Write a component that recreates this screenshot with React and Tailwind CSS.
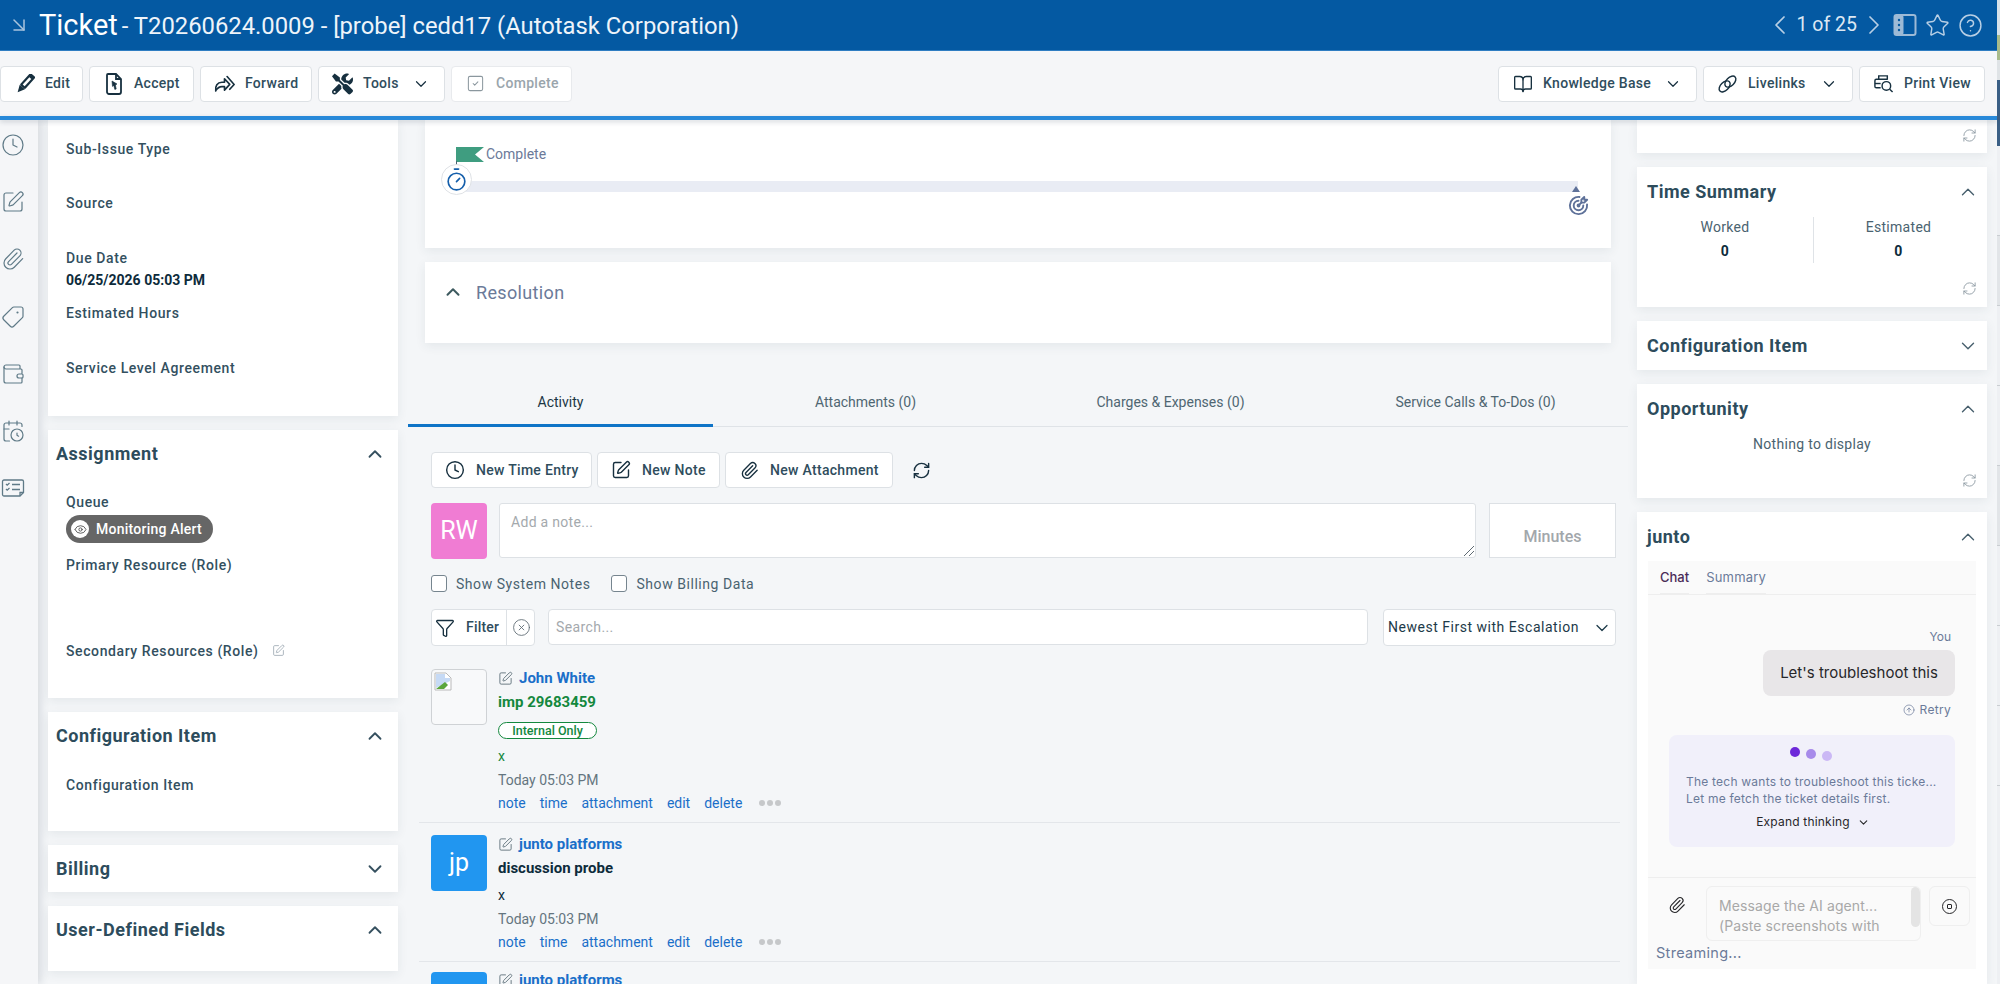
import React from "react";
import {
  ArrowDownRight, ChevronLeft, ChevronRight, ChevronUp, ChevronDown, Star, CircleHelp, Clock, SquarePen,
  Paperclip, Tag, Wallet, CalendarClock, RefreshCw, Timer, BookOpen, SquareCheck, Filter,
  CircleX, CircleArrowUp, Eye,
} from "lucide-react";
import { FaTools } from "react-icons/fa";
import { TbTargetArrow } from "react-icons/tb";

function PencilIcon() {
  return (
    <svg width="20" height="20" viewBox="0 0 20 20">
      <g transform="rotate(42 10 10)">
        <rect x="6.500" y="-2" width="7" height="16" rx="1.200" fill="#17303f" />
        <path d="M6.500 14L10 21l3.500-7z" fill="#17303f" />
        <rect x="8.700" y="2" width="2.600" height="10" fill="#fff" />
      </g>
    </svg>
  );
}

function AcceptIcon() {
  return (
    <svg width="20" height="24" viewBox="0 0 20 24" fill="none" stroke="#17303f" strokeWidth="1.800">
      <path d="M4 2h8l5 5v13a2 2 0 0 1-2 2H5a2 2 0 0 1-2-2V3a1 1 0 0 1 1-1z" />
      <path d="M12 2v5h5" />
      <path d="M8 9l5 3-1.600 1 .8 4-1.400.4-1-4-1.300 1z" fill="#17303f" strokeWidth="0.600" />
    </svg>
  );
}

function ForwardIcon() {
  return (
    <svg width="22" height="22" viewBox="0 0 24 24" fill="none" stroke="#17303f" strokeWidth="1.900" strokeLinejoin="round" strokeLinecap="round">
      <path d="M2 20c-1-6 2-10 7-10h3V6l6 6.500-6 6.500v-4H9c-3 0-5 1.500-7 4.500z" />
      <path d="M15 3.500l8 9-5 5.500" />
    </svg>
  );
}

function LinkIcon() {
  return (
    <svg width="22" height="22" viewBox="0 0 22 22" fill="none" stroke="#17303f" strokeWidth="1.500">
      <ellipse cx="8" cy="13.500" rx="7" ry="4.200" transform="rotate(-45 8 13.500)" />
      <ellipse cx="14" cy="8.500" rx="7" ry="4.200" transform="rotate(-45 14 8.500)" />
    </svg>
  );
}

function PrintIcon() {
  return (
    <svg width="22" height="22" viewBox="0 0 22 22" fill="none" stroke="#17303f" strokeWidth="1.500">
      <path d="M6 6V2.500h9V6" />
      <path d="M8 15H3.500a1.500 1.500 0 0 1-1.500-1.500v-6A1.500 1.500 0 0 1 3.500 6h12" />
      <path d="M2 10.500h6" />
      <circle cx="14" cy="13" r="4.500" />
      <path d="M17.500 16.500l3 3" />
    </svg>
  );
}

function PanelIcon() {
  return (
    <svg width="24" height="24" viewBox="0 0 24 24">
      <rect x="1.500" y="2" width="21" height="20" rx="2" fill="none" stroke="#9dbad6" strokeWidth="2" />
      <rect x="1.500" y="2" width="9" height="20" rx="2" fill="#9dbad6" />
      <circle cx="6" cy="7" r="1.200" fill="#0459a2" />
      <circle cx="6" cy="12" r="1.200" fill="#0459a2" />
      <circle cx="6" cy="17" r="1.200" fill="#0459a2" />
    </svg>
  );
}

function ChecklistIcon() {
  return (
    <svg width="24" height="24" viewBox="0 0 24 24" fill="none" stroke="#5f7a87" strokeWidth="1.300">
      <path d="M19 20H3a1.500 1.500 0 0 1-1.500-1.500v-13A1.500 1.500 0 0 1 3 4h18a1.500 1.500 0 0 1 1.500 1.500V16.500L19 20z" />
      <path d="M19 20v-3.500h3.500" />
      <path d="M5 8l1.200 1.200L8.500 7M5 13l1.200 1.200L8.500 12M11 8.500h8M11 13.500h8" />
    </svg>
  );
}

function BrokenImage() {
  return (
    <svg width="19" height="19" viewBox="0 0 19 19">
      <path d="M1 1h11l5 5v12H1z" fill="#fff" stroke="#b9b9b9" />
      <path d="M2 2h9v4h5v3L8 13l-6 3z" fill="#c6daf5" />
      <path d="M2 17l9-7 3 3-4 4z" fill="#5aa63c" />
    </svg>
  );
}

function Flag() {
  return (
    <svg width="28" height="15" viewBox="0 0 28 15">
      <path d="M0 0h28l-9 7.500 9 7.500H0z" fill="#3f9d80" />
    </svg>
  );
}

function ToolBtn({ w, icon, label, caret, disabled }) {
  return (
    <div
      style={{ width: w }}
      className={`h-[36px] shrink-0 flex items-center pl-[13px] bg-white border rounded-[4px] text-[14px] font-medium tracking-[0.3px] ${
        disabled ? "border-[#e8eaed] bg-[#f7f8f9] text-[#9aa5ac]" : "border-[#dde1e5] text-[#2f4d5d]"
      }`}
    >
      <span className="w-[21px] h-[24px] flex items-center justify-center shrink-0">{icon}</span>
      <span className="ml-[10px] whitespace-nowrap">{label}</span>
      {caret && <ChevronDown size={18} strokeWidth={1.600} className="ml-auto mr-[14px] text-[#17303f]" />}
    </div>
  );
}

function Card({ h, children, className = "" }) {
  return (
    <div
      style={{ height: h }}
      className={`shrink-0 bg-white shadow-[0_3px_10px_rgba(40,60,80,0.08)] ${className}`}
    >
      {children}
    </div>
  );
}

function Section({ title, h, open = true, children }) {
  return (
    <Card h={h} className="px-[8px] relative">
      <div className="flex items-center justify-between h-[47px]">
        <span className="text-[18px] font-bold tracking-[0.5px] text-[#2d4c5c]">{title}</span>
        {open ? (
          <ChevronUp size={22} strokeWidth={2} className="mr-[4px] text-[#35505f]" />
        ) : (
          <ChevronDown size={22} strokeWidth={2} className="mr-[4px] text-[#35505f]" />
        )}
      </div>
      {children}
    </Card>
  );
}

function Label({ children, mt }) {
  return (
    <div style={{ marginTop: mt }} className="h-[20px] leading-[20px] text-[14px] font-medium tracking-[0.6px] text-[#33505f] whitespace-nowrap">
      {children}
    </div>
  );
}

function RightSection({ title, h, open = true, children }) {
  return (
    <Card h={h} className="relative">
      <div className="flex items-center justify-between h-[49px] pl-[10px] pr-[8px]">
        <span className="text-[18px] font-bold tracking-[0.5px] text-[#2d4c5c]">{title}</span>
        {open ? (
          <ChevronUp size={22} strokeWidth={1.500} className="text-[#475f6d]" />
        ) : (
          <ChevronDown size={22} strokeWidth={1.500} className="text-[#475f6d]" />
        )}
      </div>
      {children}
    </Card>
  );
}

function Refresh({ className }) {
  return <RefreshCw size={15} strokeWidth={1.400} className={`text-[#8a97a0] ${className}`} />;
}

function ActionBtn({ w, icon, label }) {
  return (
    <div
      style={{ width: w }}
      className="h-[36px] flex items-center pl-[12px] bg-white border border-[#dde1e5] rounded-[4px] text-[14px] font-medium tracking-[0.3px] text-[#2f4d5d] shrink-0"
    >
      <span className="w-[22px] flex justify-center shrink-0 text-[#17303f]">{icon}</span>
      <span className="ml-[10px] whitespace-nowrap">{label}</span>
    </div>
  );
}

function Links() {
  return (
    <div className="mt-[3px] h-[20px] flex items-center gap-[14px] text-[14px] text-[#1a6fc9]">
      <span>note</span>
      <span>time</span>
      <span>attachment</span>
      <span>edit</span>
      <span>delete</span>
      <span className="ml-[3px] flex gap-[2px]">
        <i className="block w-[6px] h-[6px] rounded-full bg-[#c6c8ca]" />
        <i className="block w-[6px] h-[6px] rounded-full bg-[#c6c8ca]" />
        <i className="block w-[6px] h-[6px] rounded-full bg-[#c6c8ca]" />
      </span>
    </div>
  );
}

function NameLine({ name }) {
  return (
    <div className="h-[20px] flex items-center gap-[6px] text-[15px] font-bold text-[#1a6fc9] whitespace-nowrap">
      <SquarePen size={15} strokeWidth={1.500} className="text-[#64757f]" />
      <span>{name}</span>
    </div>
  );
}

function Tab({ label, active }) {
  return (
    <div
      className={`flex-1 h-[48px] pt-[2px] flex items-center justify-center text-[14px] ${
        active ? "border-b-[3px] border-[#0f74c7] text-[#1a3645]" : "border-b border-[#dfe3e7] pb-[2px] text-[#4f6672]"
      }`}
    >
      {label}
    </div>
  );
}

function ChatPanel() {
  return (
    <div className="mx-[11px] h-[408px] bg-[#fafafa] flex flex-col font-[Inter,sans-serif]">
      <div className="h-[34px] shrink-0 border-b border-[#eeeeee] flex px-[12px] gap-[17px] text-[13px]">
        <div className="h-[34px] pt-[7px] border-b-2 border-[#eeeeee] font-medium text-[#4b2c58]">Chat</div>
        <div className="h-[34px] pt-[7px] border-b-2 border-[#eeeeee] tracking-[0.2px] text-[#6b7a99]">Summary</div>
      </div>
      <div className="h-[282px] shrink-0 pt-[33px] pr-[21px] flex flex-col items-end">
        <div className="h-[18px] leading-[18px] pr-[4px] text-[12px] text-[#6b7a99]">You</div>
        <div className="mt-[4px] w-[192px] h-[46px] rounded-[8px] bg-[#e8e6e8] flex items-center justify-center text-[15px] text-[#27272a] whitespace-nowrap">
          Let's troubleshoot this
        </div>
        <div className="mt-[6px] h-[16px] pr-[4px] flex items-center gap-[5px] text-[12px] tracking-[0.3px] text-[#6b7a99]">
          <CircleArrowUp size={12} strokeWidth={1.400} />
          Retry
        </div>
        <div className="mt-[17px] w-[286px] h-[112px] rounded-[8px] bg-[#f1f0fa] flex flex-col px-[17px] pt-[12px]">
          <div className="flex justify-center gap-[6px] h-[14px] pr-[2px]">
            <i className="block w-[10px] h-[10px] rounded-full bg-[#6d28d9]" />
            <i className="block w-[10px] h-[10px] rounded-full bg-[#a78bea] mt-[2px]" />
            <i className="block w-[10px] h-[10px] rounded-full bg-[#cbb8f5] mt-[4px]" />
          </div>
          <div className="mt-[12px] text-[12px] leading-[17px] tracking-[0.22px] text-[#6b7a99] whitespace-nowrap">
            The tech wants to troubleshoot this ticke...
            <br />
            Let me fetch the ticket details first.
          </div>
          <div className="mt-[6px] h-[18px] flex items-center justify-center gap-[7px] pl-[2px] text-[12px] tracking-[0.2px] text-[#27272a]">
            Expand thinking
            <ChevronDown size={13} strokeWidth={2} />
          </div>
        </div>
      </div>
      <div className="border-t border-[#eeeeee] flex-1 relative">
        <div className="flex items-start pt-[8px]">
          <span className="w-[58px] flex justify-center pt-[10px] text-[#27272a]">
            <Paperclip size={18} strokeWidth={1.500} />
          </span>
          <div className="w-[215px] h-[55px] overflow-hidden bg-[#fafafa] border border-[#efefef] rounded-[6px] pl-[12px] pt-[9px] relative text-[14px] leading-[20px] tracking-[0.1px] text-[#a8a8a8] whitespace-nowrap">
            Message the AI agent...
            <br />
            (Paste screenshots with
            <br />
            Ctrl+V or upload)
            <i className="absolute right-[0px] top-[0px] block w-[9px] h-[40px] rounded-[5px] bg-[#e4e4e4]" />
          </div>
          <div className="ml-[8px] w-[41px] h-[40px] rounded-[6px] border border-[#efefef] flex items-center justify-center">
            <span className="w-[15px] h-[15px] rounded-full border-[1.500px] border-[#27272a] flex items-center justify-center">
              <i className="block w-[5px] h-[5px] rounded-[1px] border border-[#27272a]" />
            </span>
          </div>
        </div>
        <div className="absolute left-[8px] top-[65px] h-[20px] leading-[20px] text-[14.500px] tracking-[0.3px] text-[#6b7a99]">Streaming...</div>
      </div>
    </div>
  );
}

export default function App() {
  return (
    <div className="w-[2000px] h-[984px] flex overflow-hidden bg-[#f4f6f8] font-[Roboto,sans-serif]">
      <div className="w-[1997px] h-[984px] flex flex-col shrink-0">
        {/* title bar */}
        <div className="h-[51px] shrink-0 bg-[#0459a2] border-b border-[#2f7dc2] flex items-center text-white pl-[7px] pr-[14px]">
          <ArrowDownRight size={24} strokeWidth={1.500} className="text-[#a9c4de]" />
          <span className="ml-[8px] text-[29px] leading-[32px]">Ticket</span>
          <span className="ml-[4px] mt-[1px] text-[23.800px] leading-[32px] whitespace-nowrap text-[#eef4fa]">- T20260624.0009 - [probe] cedd17 (Autotask Corporation)</span>
          <div className="ml-auto flex items-center text-[#b8cfe5]">
            <ChevronLeft size={32} strokeWidth={1.300} />
            <span className="ml-[1px] text-[19.500px] text-[#dce8f3] whitespace-nowrap">1 of 25</span>
            <ChevronRight size={32} strokeWidth={1.300} className="ml-[1px]" />
            <span className="ml-[3px]"><PanelIcon /></span>
            <Star size={25} strokeWidth={1.400} className="ml-[8px]" />
            <CircleHelp size={25} strokeWidth={1.400} className="ml-[8px]" />
          </div>
        </div>

        {/* toolbar */}
        <div className="h-[65px] shrink-0 bg-[#f5f6f8] flex items-center gap-[6px] pr-[12px]">
          <ToolBtn w={83} label="Edit" icon={<PencilIcon />} />
          <ToolBtn w={105} label="Accept" icon={<AcceptIcon />} />
          <ToolBtn w={112} label="Forward" icon={<ForwardIcon />} />
          <ToolBtn w={127} label="Tools" caret icon={<FaTools size={22} className="text-[#17303f]" />} />
          <ToolBtn w={121} label="Complete" disabled icon={<SquareCheck size={19} strokeWidth={1.300} className="text-[#8b979e]" />} />
          <div className="ml-auto flex gap-[6px]">
            <ToolBtn w={199} label="Knowledge Base" caret icon={<BookOpen size={20} strokeWidth={1.600} className="text-[#17303f]" />} />
            <ToolBtn w={150} label="Livelinks" caret icon={<LinkIcon />} />
            <ToolBtn w={126} label="Print View" icon={<PrintIcon />} />
          </div>
        </div>
        <div className="h-[4px] shrink-0 bg-[#2889d9] shadow-[0_2px_5px_rgba(40,60,80,0.2)] relative z-10" />

        {/* body */}
        <div className="flex-1 flex overflow-hidden">
          <div className="w-[38px] shrink-0 bg-[#f5f6f8] shadow-[3px_0_8px_rgba(40,60,80,0.14)] flex flex-col items-start pl-[1px] pt-[13px] text-[#5f7a87] gap-[33.200px]">
            <Clock size={24} strokeWidth={1.200} />
            <SquarePen size={24} strokeWidth={1.200} />
            <Paperclip size={24} strokeWidth={1.200} />
            <Tag size={24} strokeWidth={1.200} className="rotate-[90deg]" />
            <Wallet size={24} strokeWidth={1.200} />
            <CalendarClock size={24} strokeWidth={1.200} />
            <ChecklistIcon />
          </div>

          {/* left column */}
          <div className="w-[350px] ml-[10px] shrink-0 flex flex-col gap-[14px]">
            <Card h={296} className="pl-[18px] pt-[19px]">
              <Label>Sub-Issue Type</Label>
              <Label mt={34}>Source</Label>
              <Label mt={35}>Due Date</Label>
              <div className="mt-[2px] h-[20px] leading-[20px] text-[14px] font-bold text-[#0d2b3b]">06/25/2026 05:03 PM</div>
              <Label mt={13}>Estimated Hours</Label>
              <Label mt={35}>Service Level Agreement</Label>
            </Card>
            <Section title="Assignment" h={268}>
              <div className="pl-[10px] pt-[15px]">
                <Label>Queue</Label>
                <div className="mt-[3px] w-[147px] h-[28px] rounded-full bg-[#666666] flex items-center pl-[5px] text-[14px] font-medium tracking-[0.25px] text-white">
                  <span className="w-[18px] h-[18px] rounded-full bg-white flex items-center justify-center">
                    <Eye size={13} strokeWidth={1.700} className="text-[#555555]" />
                  </span>
                  <span className="ml-[7px] whitespace-nowrap">Monitoring Alert</span>
                </div>
                <Label mt={12}>Primary Resource (Role)</Label>
                <div className="mt-[66px] flex items-center">
                  <Label>Secondary Resources (Role)</Label>
                  <SquarePen size={13} strokeWidth={1.300} className="ml-[13px] -mt-[2px] text-[#8b9aa5]" />
                </div>
              </div>
            </Section>
            <Section title="Configuration Item" h={119}>
              <div className="pl-[10px] pt-[16px]">
                <Label>Configuration Item</Label>
              </div>
            </Section>
            <Section title="Billing" h={47} open={false} />
            <Section title="User-Defined Fields" h={65} />
          </div>

          {/* center column */}
          <div className="w-[1220px] ml-[10px] shrink-0 flex flex-col">
            <div className="px-[17px] flex flex-col gap-[14px]">
              <Card h={128} className="relative">
                <div className="absolute left-[31px] top-[27px]"><Flag /></div>
                <div className="absolute left-[31px] top-[41px] w-px h-[4px] bg-[#4a6370]" />
                <div className="absolute left-[61px] top-[24px] text-[14px] leading-[20px] text-[#6b7a99]">Complete</div>
                <div className="absolute left-[33px] top-[61px] w-[1120px] h-[11px] bg-[#e9ecf4]" />
                <div className="absolute left-[16px] top-[44px] w-[31px] h-[31px] rounded-full bg-white border border-[#dfe2e6] flex items-center justify-center">
                  <Timer size={25} strokeWidth={1.600} className="text-[#155fab]" />
                </div>
                <div className="absolute left-[1147px] top-[66px] w-0 h-0 border-x-[4px] border-x-transparent border-b-[6px] border-b-[#5e7199]" />
                <TbTargetArrow size={23} className="absolute left-[1142px] top-[74px] text-[#5e7199]" />
              </Card>
              <Card h={81} className="flex items-start pl-[17px] pt-[19px]">
                <ChevronUp size={22} strokeWidth={2.200} className="text-[#3d5a5f]" />
                <span className="ml-[12px] text-[18px] leading-[24px] tracking-[0.35px] text-[#6b7a99]">Resolution</span>
              </Card>
            </div>

            <div className="mt-[36px] flex">
              <Tab label="Activity" active />
              <Tab label="Attachments (0)" />
              <Tab label="Charges & Expenses (0)" />
              <Tab label="Service Calls & To-Dos (0)" />
            </div>

            <div className="pl-[23px] pr-[12px]">
              <div className="mt-[25px] flex items-center gap-[5px]">
                <ActionBtn w={161} label="New Time Entry" icon={<Clock size={20} strokeWidth={1.700} />} />
                <ActionBtn w={123} label="New Note" icon={<SquarePen size={20} strokeWidth={1.700} />} />
                <ActionBtn w={168} label="New Attachment" icon={<Paperclip size={19} strokeWidth={1.700} />} />
                <RefreshCw size={19} strokeWidth={1.800} className="ml-[14px] text-[#17303f]" />
              </div>

              <div className="mt-[15px] flex">
                <div className="w-[56px] h-[56px] rounded-[4px] bg-[#f07cd3] flex items-center justify-center text-[25px] text-white">RW</div>
                <div className="ml-[12px] w-[977px] h-[55px] bg-white border border-[#dde1e5] rounded-[3px] pl-[11px] pt-[8px] text-[14px] leading-[20px] tracking-[0.3px] text-[#a4a9ad] relative">
                  Add a note...
                  <svg width="11" height="11" viewBox="0 0 11 11" className="absolute right-[1px] bottom-[1px]" stroke="#5f6b73" strokeWidth="1">
                    <path d="M1 11L11 1M6 11l5-5" />
                  </svg>
                </div>
                <div className="ml-[13px] w-[127px] h-[55px] bg-white border border-[#dde1e5] pt-[21px] text-center text-[16px] leading-[24px] font-medium text-[#a2a7ab]">Minutes</div>
              </div>

              <div className="mt-[16px] h-[17px] flex items-center text-[14px] tracking-[0.55px] text-[#4a6370]">
                <i className="block w-[16px] h-[17px] bg-white border border-[#76858f] rounded-[3px]" />
                <span className="ml-[9px] mt-[2px]">Show System Notes</span>
                <i className="ml-[21px] block w-[16px] h-[17px] bg-white border border-[#76858f] rounded-[3px]" />
                <span className="ml-[9px] mt-[2px]">Show Billing Data</span>
              </div>

              <div className="mt-[17px] flex items-start">
                <div className="w-[104px] h-[37px] bg-white border border-[#dde1e5] rounded-[4px] flex items-center text-[14px] font-medium tracking-[0.2px] text-[#2f4d5d]">
                  <Filter size={20} strokeWidth={1.600} className="ml-[3px] text-[#17303f]" />
                  <span className="ml-[11px]">Filter</span>
                  <span className="ml-[7px] h-[35px] border-l border-[#dde1e5] pl-[5px] flex items-center">
                    <CircleX size={19} strokeWidth={1.100} className="text-[#5f6b73]" />
                  </span>
                </div>
                <div className="ml-[13px] w-[820px] h-[36px] bg-white border border-[#dde1e5] rounded-[4px] pl-[7px] flex items-center text-[14px] tracking-[0.4px] text-[#a4a9ad]">Search...</div>
                <div className="ml-[15px] w-[233px] h-[37px] bg-white border border-[#dde1e5] rounded-[4px] pl-[4px] flex items-center text-[14px] tracking-[0.52px] text-[#1d3a49] whitespace-nowrap">
                  Newest First with Escalation
                  <ChevronDown size={20} strokeWidth={1.500} className="ml-auto mr-[3px]" />
                </div>
              </div>
            </div>

            {/* activity feed */}
            <div className="mt-[22px] ml-[11px] w-[1201px]">
              <div className="border-b border-[#e3e6ea] pl-[12px] h-[155px] flex">
                <div className="mt-[1px] w-[56px] h-[56px] rounded-[4px] border border-[#cfd2d5] bg-[#f8f9fa] shrink-0 pl-[2px] pt-[2px]"><BrokenImage /></div>
                <div className="ml-[11px]">
                  <NameLine name="John White" />
                  <div className="mt-[4px] h-[20px] leading-[20px] text-[15px] font-bold text-[#14883e]">imp 29683459</div>
                  <div className="mt-[10px] w-[99px] h-[17px] rounded-full border border-[#14883e] bg-white text-center text-[12.500px] font-medium leading-[15px] text-[#14883e]">Internal Only</div>
                  <div className="mt-[7px] h-[20px] leading-[20px] text-[14px] text-[#14883e]">x</div>
                  <div className="mt-[4px] h-[20px] leading-[20px] text-[14px] text-[#64757f]">Today 05:03 PM</div>
                  <Links />
                </div>
              </div>
              <div className="border-b border-[#e3e6ea] pl-[12px] pt-[12px] h-[139px] flex">
                <div className="w-[56px] h-[56px] rounded-[4px] bg-[#2196f0] shrink-0 flex items-center justify-center text-[25px] text-white">jp</div>
                <div className="ml-[11px] -mt-[1px]">
                  <NameLine name="junto platforms" />
                  <div className="mt-[4px] h-[20px] leading-[20px] text-[15px] font-bold text-[#0d2b3b]">discussion probe</div>
                  <div className="mt-[7px] h-[20px] leading-[20px] text-[14px] text-[#0d2b3b]">x</div>
                  <div className="mt-[4px] h-[20px] leading-[20px] text-[14px] text-[#64757f]">Today 05:03 PM</div>
                  <Links />
                </div>
              </div>
              <div className="pl-[12px] pt-[10px] flex">
                <div className="w-[56px] h-[56px] rounded-[4px] bg-[#2196f0] shrink-0" />
                <div className="ml-[11px] -mt-[2px]">
                  <NameLine name="junto platforms" />
                </div>
              </div>
            </div>
          </div>

          {/* right column */}
          <div className="w-[350px] ml-[9px] shrink-0 flex flex-col gap-[14px]">
            <Card h={33} className="flex justify-end pr-[10px] pt-[8px]">
              <Refresh />
            </Card>
            <RightSection title="Time Summary" h={140}>
              <div className="flex pt-[1px]">
                <div className="w-[176px] text-center text-[14px] leading-[20px] tracking-[0.3px] text-[#4a6370]">
                  Worked
                  <div className="mt-[4px] font-bold text-[#0d2b3b]">0</div>
                </div>
                <div className="w-px h-[46px] bg-[#dfe3e7]" />
                <div className="w-[169px] text-center text-[14px] leading-[20px] tracking-[0.3px] text-[#4a6370]">
                  Estimated
                  <div className="mt-[4px] font-bold text-[#0d2b3b]">0</div>
                </div>
              </div>
              <Refresh className="absolute right-[10px] bottom-[11px]" />
            </RightSection>
            <RightSection title="Configuration Item" h={49} open={false} />
            <RightSection title="Opportunity" h={114}>
              <div className="pt-[1px] text-center text-[14px] leading-[20px] tracking-[0.3px] text-[#4a6370]">Nothing to display</div>
              <Refresh className="absolute right-[10px] bottom-[10px]" />
            </RightSection>
            <RightSection title="junto" h={472}>
              <ChatPanel />
            </RightSection>
          </div>
        </div>
      </div>

      {/* sliver of the window behind */}
      <div className="w-[3px] h-[984px] shrink-0 flex flex-col bg-[#eef0f3]">
        <div className="h-[35px] bg-[#d7e2ea]" />
        <div className="h-[25px] bg-[#a9bb8a]" />
        <div className="h-[20px] bg-[#dfe3e6]" />
        <div className="h-[66px] bg-[#3a5f85]" />
        <div className="h-[90px] border-b border-[#c9cdd1]" />
        <div className="h-[70px] bg-[#e2e5e8] border-b border-[#c9cdd1]" />
        <div className="h-[80px] border-b border-[#c9cdd1]" />
        <div className="h-[80px] border-b border-[#c9cdd1]" />
        <div className="h-[80px] bg-[#e2e5e8] border-b border-[#c9cdd1]" />
        <div className="h-[80px] border-b border-[#c9cdd1]" />
        <div className="h-[80px] border-b border-[#c9cdd1]" />
        <div className="h-[80px] border-b border-[#c9cdd1]" />
      </div>
    </div>
  );
}
